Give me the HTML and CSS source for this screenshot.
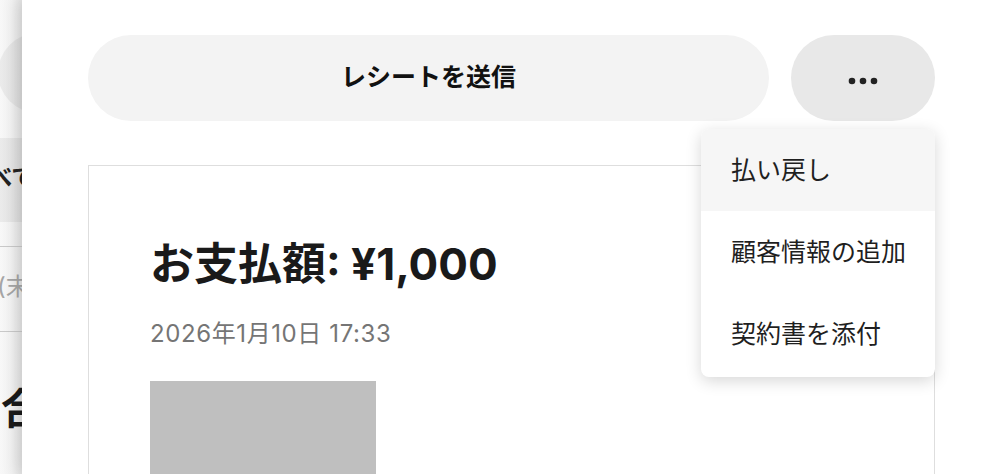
FILE: index.html
```html
<!DOCTYPE html>
<html lang="ja">
<head>
<meta charset="utf-8">
<title>レシート</title>
<link rel="stylesheet" href="styles.css">
</head>
<body>
<div class="page">
  <div class="bg">
    <div class="bg-circle"></div>
    <div class="bg-tab"><span>すべて</span></div>
    <div class="bg-row">(末払い</div>
    <div class="bg-title">合計</div>
  </div>
  <aside class="drawer">
    <div class="actions">
      <button class="btn-primary">レシートを送信</button>
      <div class="more-wrap">
        <button class="btn-more" aria-label="その他">
          <svg width="30" height="10" viewBox="0 0 30 10"><circle cx="4" cy="5" r="3.3" fill="#222"/><circle cx="15" cy="5" r="3.3" fill="#222"/><circle cx="26" cy="5" r="3.3" fill="#222"/></svg>
        </button>
        <ul class="menu">
          <li class="menu-item active">払い戻し</li>
          <li class="menu-item">顧客情報の追加</li>
          <li class="menu-item">契約書を添付</li>
        </ul>
      </div>
    </div>
    <section class="card">
      <h1 class="amount">お支払額: ¥1,000</h1>
      <p class="date">2026年1月10日 17:33</p>
      <div class="thumb"></div>
    </section>
  </aside>
</div>
</body>
</html>
```

FILE: styles.css
```css
* { box-sizing: border-box; }
html, body { margin: 0; padding: 0; }
body {
  width: 986px;
  height: 474px;
  overflow: hidden;
  font-family: "Inter", "Noto Sans CJK JP", sans-serif;
  background: #f7f7f7;
  color: #1a1a1a;
}
.page {
  position: relative;
  width: 986px;
  height: 474px;
  overflow: hidden;
}
.bg {
  display: flex;
  flex-direction: column;
  padding-top: 33px;
  height: 474px;
  background: linear-gradient(to right, #f8f8f8 0, #f2f2f2 12px, #e4e4e4 22px);
}
.bg-circle {
  width: 80px;
  height: 80px;
  border-radius: 50%;
  margin-left: -2px;
  background: rgba(0,0,0,0.05);
}
.bg-tab {
  margin-top: 25px;
  height: 84px;
  background: rgba(0,0,0,0.05);
  font-weight: 700;
  font-size: 24px;
  line-height: 80px;
  color: #222;
  white-space: nowrap;
}
.bg-tab span { display: inline-block; margin-left: -34px; }
.bg-row {
  margin-top: 24px;
  height: 86px;
  border-top: 1px solid #c9c9c9;
  border-bottom: 1px solid #c9c9c9;
  font-size: 24px;
  line-height: 80px;
  color: #a5a5a5;
  white-space: nowrap;
  margin-left: -3px;
}
.bg-title {
  margin-top: 52px;
  font-size: 42px;
  font-weight: 700;
  line-height: 50px;
  color: #1a1a1a;
  white-space: nowrap;
  margin-left: 1px;
}
.drawer {
  position: absolute;
  top: 0;
  left: 22px;
  right: 0;
  bottom: 0;
  background: #fff;
  padding: 35px 51px 0 66px;
  box-shadow: -6px 0 14px rgba(0,0,0,0.10);
}
.actions {
  display: flex;
  gap: 22px;
  height: 86px;
}
.btn-primary {
  flex: 1;
  border: none;
  border-radius: 43px;
  background: #f3f3f3;
  font-family: inherit;
  font-size: 25px;
  font-weight: 700;
  color: #111;
  padding: 0 0 6px;
}
.more-wrap {
  position: relative;
  width: 144px;
}
.btn-more {
  width: 144px;
  height: 86px;
  border: none;
  border-radius: 43px;
  background: #e8e8e8;
  display: flex;
  align-items: center;
  justify-content: center;
  padding: 5px 0 0;
}
.menu {
  position: absolute;
  top: calc(100% + 8px);
  right: 0;
  width: 234px;
  margin: 0;
  padding: 0 0 2px;
  list-style: none;
  background: #fff;
  border-radius: 8px;
  overflow: hidden;
  box-shadow: 0 4px 16px rgba(0,0,0,0.16);
  z-index: 2;
}
.menu-item {
  height: 82px;
  display: flex;
  align-items: center;
  padding: 0 0 5px 30px;
  font-size: 25px;
  color: #1f1f1f;
  white-space: nowrap;
}
.menu-item.active { background: #f6f6f6; }
.card {
  margin-top: 44px;
  height: 340px;
  border: 1px solid #dedede;
  border-bottom: none;
  padding: 0 0 0 61px;
  display: flex;
  flex-direction: column;
  align-items: flex-start;
}
.amount {
  margin: 72px 0 0;
  font-size: 44px;
  line-height: 52px;
  font-weight: 700;
  color: #1a1a1a;
  white-space: nowrap;
}
.date {
  margin: 29px 0 0;
  font-size: 24px;
  line-height: 29px;
  letter-spacing: 0.6px;
  color: #757575;
  white-space: nowrap;
}
.thumb {
  margin-top: 33px;
  width: 226px;
  height: 120px;
  background: #bfbfbf;
}
```
